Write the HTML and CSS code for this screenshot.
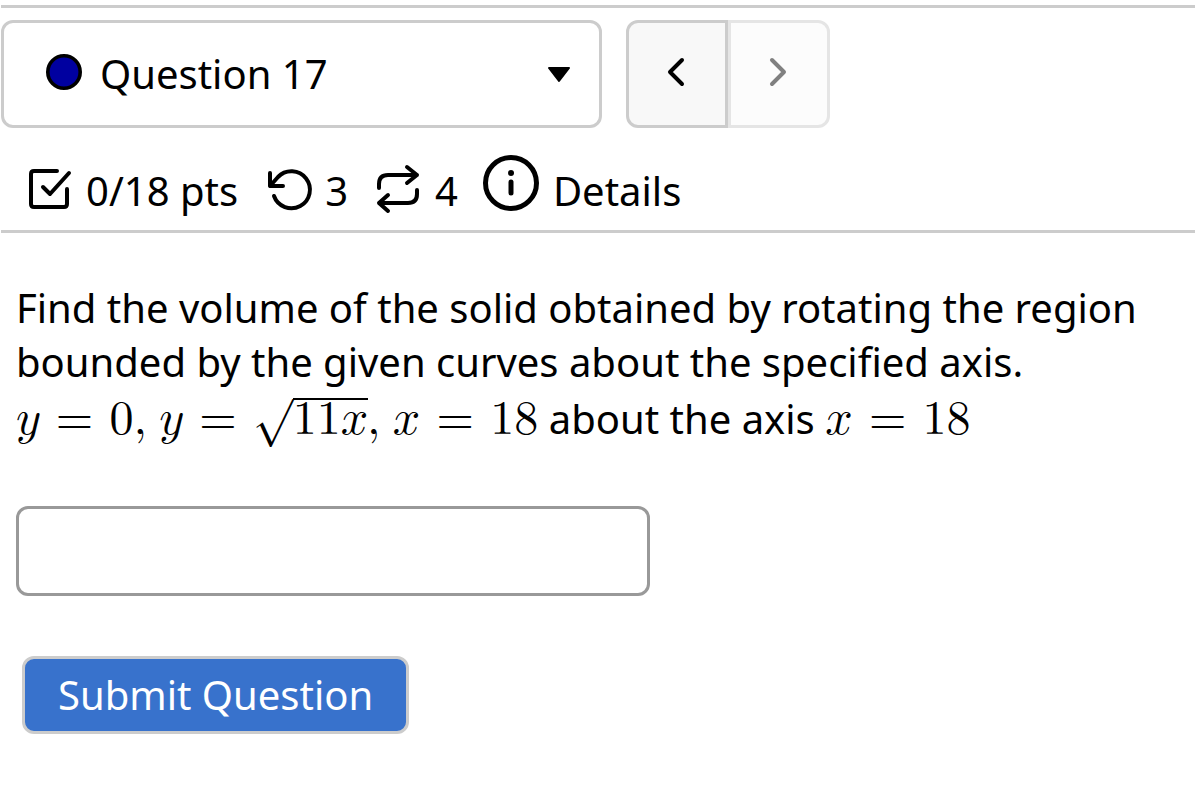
FILE: index.html
```html
<!DOCTYPE html>
<html lang="en">
<head>
<meta charset="utf-8">
<meta name="viewport" content="width=device-width, initial-scale=1">
<title>Question 17</title>
<link rel="stylesheet" href="styles.css">
</head>
<body>
<header class="header">
  <nav class="nav" aria-label="Questions">
    <button type="button" class="picker" aria-haspopup="listbox">
      <svg class="dot" viewBox="0 0 36 36" aria-hidden="true"><circle cx="18" cy="18" r="16.2"/></svg>
      <span class="picker-label">Question 17</span>
      <svg class="caret" viewBox="0 0 24 18" aria-hidden="true"><path d="M2 3H22L12 16Z"/></svg>
    </button>
    <div class="pager">
      <button type="button" class="page-button prev" aria-label="Previous question">
        <svg class="chevron" viewBox="0 0 20 32" aria-hidden="true"><path d="M16 4L4 16L16 28"/></svg>
      </button>
      <button type="button" class="page-button next" aria-label="Next question" disabled>
        <svg class="chevron" viewBox="0 0 20 32" aria-hidden="true"><path d="M4 4L16 16L4 28"/></svg>
      </button>
    </div>
  </nav>
  <div class="status">
    <span class="stat">
      <svg class="icon" viewBox="0 0 44 44" aria-hidden="true"><path d="M30 4H7Q4 4 4 7V37Q4 40 7 40H37Q40 40 40 37V22M16 20L23 27L42 6"/></svg>
      <span>0/18 pts</span>
    </span>
    <span class="stat">
      <svg class="icon" viewBox="0 0 44 44" aria-hidden="true"><path d="M4 6V19H17M4 19L12 10A18.5 18.5 0 1 1 8 29"/></svg>
      <span>3</span>
    </span>
    <span class="stat">
      <svg class="icon tall" viewBox="0 0 44 52" aria-hidden="true"><path d="M3 25V21Q3 12 12 12H41M31 4L41 12L31 20M41 27V31Q41 40 32 40H3M12 32L3 40L12 48"/></svg>
      <span>4</span>
    </span>
    <button type="button" class="details">
      <svg class="info" viewBox="0 0 56 56" aria-hidden="true"><circle cx="28" cy="28" r="25.5"/><path d="M28 27V38"/><circle class="info-dot" cx="28" cy="18" r="3"/></svg>
      <span>Details</span>
    </button>
  </div>
</header>
<main class="question">
  <p class="prompt">Find the volume of the solid obtained by rotating the region bounded by the given curves about the specified axis.</p>
  <p class="equations"><math><mi>y</mi><mo>=</mo><mn>0</mn></math><span class="comma">,</span> <math class="ends-in-root"><mi>y</mi><mo>=</mo><msqrt><mn>11</mn><mi>x</mi></msqrt></math><span class="comma">,</span> <math><mi>x</mi><mo>=</mo><mn>18</mn></math> about the axis <math><mi>x</mi><mo>=</mo><mn>18</mn></math></p>
  <input class="answer" type="text" aria-label="Answer">
  <button type="submit" class="submit">Submit Question</button>
</main>
</body>
</html>
```
FILE: styles.css
```css
* {
  box-sizing: border-box;
}

body {
  margin: 0;
  background: #fff;
  color: #000;
  font-family: "Trebuchet MS", "Noto Sans", sans-serif;
  font-size: 40px;
  line-height: 54px;
}

button,
input {
  font: inherit;
  color: inherit;
}

svg {
  flex: none;
  overflow: visible;
  fill: none;
  stroke: #000;
  stroke-width: 4;
  stroke-linecap: round;
  stroke-linejoin: round;
}

.header {
  margin: 5px 0 0 1px;
  border-top: 3px solid #ccc;
  border-bottom: 3px solid #ccc;
}

.nav {
  display: flex;
  gap: 24px;
  padding-top: 12px;
}

.picker {
  display: flex;
  align-items: center;
  width: 601px;
  height: 108px;
  padding: 0 28px 0 42px;
  border: 3px solid #ccc;
  border-radius: 12px;
  background: #fff;
}

.dot {
  width: 36px;
  height: 36px;
  margin: 0 18px 4px 0;
  fill: #0000a0;
  stroke-width: 3.6;
}

.picker-label {
  flex: 1;
  text-align: left;
}

.caret {
  width: 24px;
  height: 18px;
  fill: #000;
  stroke-width: 2;
}

.pager {
  display: flex;
}

.page-button {
  display: flex;
  align-items: center;
  justify-content: center;
  width: 102px;
  height: 108px;
  padding: 0 2px 4px 0;
  border: 3px solid #ccc;
  background: #f8f8f8;
}

.prev {
  border-radius: 12px 0 0 12px;
}

.next {
  border-color: #e5e5e5;
  border-radius: 0 12px 12px 0;
  background: #fcfcfc;
}

.chevron {
  width: 20px;
  height: 32px;
}

.next .chevron {
  stroke: #808080;
}

.status {
  display: flex;
  align-items: center;
  gap: 28px;
  padding: 27px 0 11px 26px;
}

.stat {
  display: flex;
  align-items: center;
  gap: 15px;
  padding-top: 8px;
}

.icon {
  width: 44px;
  height: 44px;
  margin-bottom: 4px;
}

.tall {
  height: 52px;
}

.details {
  display: flex;
  align-items: center;
  gap: 14px;
  margin-left: -3px;
  padding: 0;
  border: 0;
  background: none;
}

.details span {
  padding-top: 8px;
}

.info {
  width: 56px;
  height: 56px;
  margin-bottom: 8px;
  stroke-width: 5;
}

.info-dot {
  fill: #000;
  stroke: none;
}

.question {
  padding: 48px 16px;
}

.prompt,
.equations {
  margin: 0;
}

.equations {
  padding-top: 3px;
}

math,
.comma {
  font-family: "Latin Modern Math", "Liberation Serif", serif;
  font-size: 48px;
}

mo {
  padding: 0 3px;
}

.comma {
  margin-right: 2px;
}

/* closes the side bearing after the radical's bar */
.ends-in-root {
  margin-right: -12px;
}

.answer {
  display: block;
  width: 634px;
  max-width: 100%;
  height: 90px;
  margin-top: 60px;
  padding: 0 16px;
  border: 3px solid #999;
  border-radius: 12px;
  background: #fff;
}

.submit {
  display: block;
  margin: 60px 0 0 6px;
  padding: 9px 33px;
  border: 3px solid #ccc;
  border-radius: 12px;
  background: #3872cc;
  color: #fff;
}
```
